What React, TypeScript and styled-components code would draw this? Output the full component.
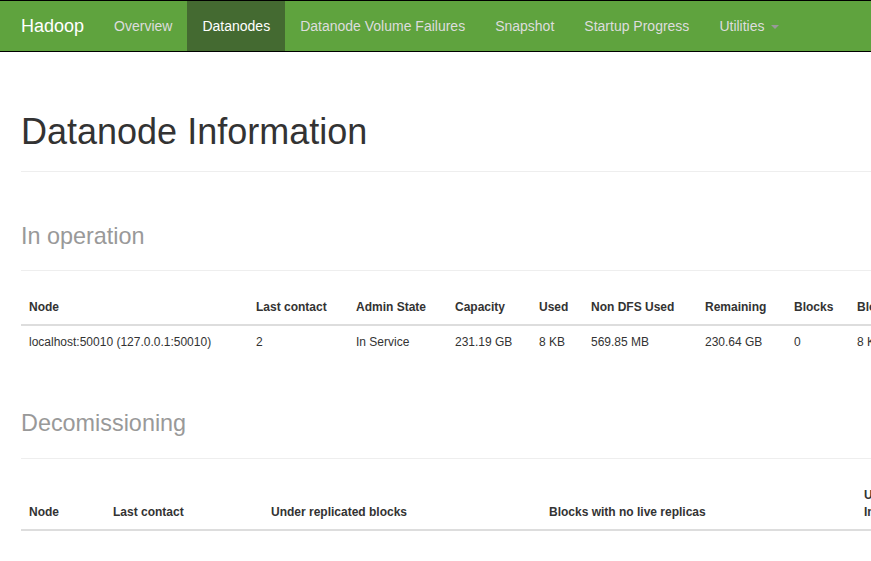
import React from "react";
import styled, { createGlobalStyle } from "styled-components";

const GlobalStyle = createGlobalStyle`
  html, body {
    margin: 0;
    padding: 0;
    overflow-x: hidden;
  }
  body {
    font-family: "Liberation Sans", Arial, Helvetica, sans-serif;
    font-size: 14px;
    line-height: 1.428571429;
    color: #333;
    background: #fff;
  }
`;

const Navbar = styled.nav`
  display: flex;
  align-items: stretch;
  height: 50px;
  background: #5fa33e;
  border-top: 1px solid #000;
  border-bottom: 1px solid #000;
  padding-left: 6px;
  white-space: nowrap;
`;

const Brand = styled.a`
  display: block;
  padding: 15px;
  font-size: 18px;
  line-height: 20px;
  color: #fff;
  text-decoration: none;
`;

const NavList = styled.ul`
  display: flex;
  margin: 0;
  padding: 0;
  list-style: none;
`;

const NavItem = styled.li<{ $active?: boolean }>`
  display: block;
  background: ${(p) => (p.$active ? "#446a31" : "transparent")};
`;

const NavLink = styled.a<{ $active?: boolean }>`
  display: block;
  padding: 15px;
  line-height: 20px;
  font-size: 14px;
  color: ${(p) => (p.$active ? "#fff" : "#ddd")};
  text-decoration: none;
`;

const Caret = styled.span`
  display: inline-block;
  width: 0;
  height: 0;
  margin-left: 6px;
  vertical-align: middle;
  border-top: 4px solid #999;
  border-left: 4px solid transparent;
  border-right: 4px solid transparent;
`;

const Container = styled.main`
  width: 1128px;
  padding: 20px 0 0 21px;
`;

const PageHeader = styled.div`
  margin: 40px 0 20px;
  padding-bottom: 9px;
  border-bottom: 1px solid #eee;
`;

const H1 = styled.h1`
  margin: 20px 0 10px;
  font-size: 36px;
  line-height: 1.1;
  font-weight: 500;
  color: #333;
`;

const Small = styled.small`
  font-size: 65%;
  font-weight: normal;
  color: #999;
  line-height: 1;
`;

const Table = styled.table`
  width: 100%;
  margin-bottom: 20px;
  border-collapse: collapse;
  border-spacing: 0;
  table-layout: fixed;
  font-size: 12px;
`;

const Th = styled.th<{ $w?: number }>`
  box-sizing: border-box;
  width: ${(p) => (p.$w ? `${p.$w}px` : "auto")};
  padding: 8px;
  text-align: left;
  vertical-align: bottom;
  font-weight: bold;
  line-height: 1.428571429;
  border-bottom: 2px solid #ddd;
  white-space: nowrap;
  overflow: hidden;
`;

const Td = styled.td`
  padding: 8px;
  vertical-align: top;
  line-height: 1.428571429;
  border-top: 1px solid #ddd;
  white-space: nowrap;
  overflow: hidden;
`;

const navItems = [
  "Overview",
  "Datanodes",
  "Datanode Volume Failures",
  "Snapshot",
  "Startup Progress",
];

const opCols: [string, number][] = [
  ["Node", 227],
  ["Last contact", 100],
  ["Admin State", 99],
  ["Capacity", 84],
  ["Used", 52],
  ["Non DFS Used", 114],
  ["Remaining", 89],
  ["Blocks", 63],
  ["Block pool used", 120],
  ["Failed Volumes", 100],
  ["Version", 80],
];

const opRow = [
  "localhost:50010 (127.0.0.1:50010)",
  "2",
  "In Service",
  "231.19 GB",
  "8 KB",
  "569.85 MB",
  "230.64 GB",
  "0",
  "8 KB (0%)",
  "0",
  "2.7.1",
];

export default function App() {
  return (
    <>
      <GlobalStyle />
      <Navbar>
        <Brand href="#">Hadoop</Brand>
        <NavList>
          {navItems.map((n) => (
            <NavItem key={n} $active={n === "Datanodes"}>
              <NavLink href="#" $active={n === "Datanodes"}>
                {n}
              </NavLink>
            </NavItem>
          ))}
          <NavItem>
            <NavLink href="#">
              Utilities
              <Caret />
            </NavLink>
          </NavItem>
        </NavList>
      </Navbar>
      <Container>
        <PageHeader>
          <H1>Datanode Information</H1>
        </PageHeader>

        <PageHeader>
          <H1>
            <Small>In operation</Small>
          </H1>
        </PageHeader>
        <Table>
          <thead>
            <tr>
              {opCols.map(([c, w]) => (
                <Th key={c} $w={w}>
                  {c}
                </Th>
              ))}
            </tr>
          </thead>
          <tbody>
            <tr>
              {opRow.map((v, i) => (
                <Td key={i}>{v}</Td>
              ))}
            </tr>
          </tbody>
        </Table>

        <PageHeader>
          <H1>
            <Small>Decomissioning</Small>
          </H1>
        </PageHeader>
        <Table>
          <thead>
            <tr>
              <Th $w={84}>Node</Th>
              <Th $w={158}>Last contact</Th>
              <Th $w={278}>Under replicated blocks</Th>
              <Th $w={315}>Blocks with no live replicas</Th>
              <Th>
                Under Replicated Blocks
                <br />
                In files under construction
              </Th>
            </tr>
          </thead>
        </Table>
      </Container>
    </>
  );
}
